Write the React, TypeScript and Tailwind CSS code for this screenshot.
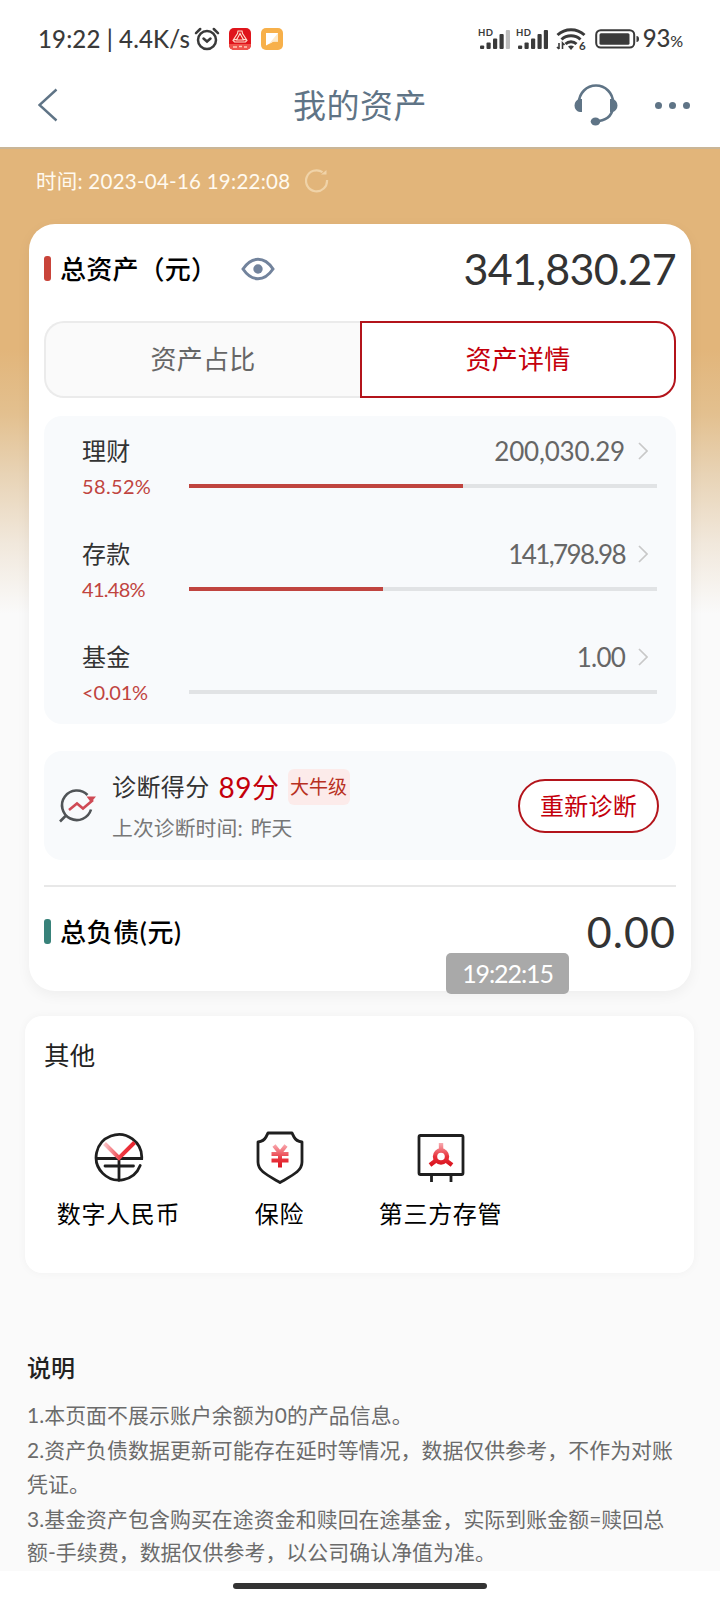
import type { ReactNode } from "react";

interface Asset {
  name: string;
  percent: string;
  ratio: number;
  amount: string;
  percentSpacing: string;
  amountSpacing: string;
}

const ASSETS: Asset[] = [
  { name: "理财", percent: "58.52%", ratio: 58.52, amount: "200,030.29", percentSpacing: "tracking-[0.35px]", amountSpacing: "tracking-[-0.2px]" },
  { name: "存款", percent: "41.48%", ratio: 41.48, amount: "141,798.98", percentSpacing: "tracking-[-0.7px]", amountSpacing: "tracking-[-1.6px]" },
  { name: "基金", percent: "<0.01%", ratio: 0, amount: "1.00", percentSpacing: "tracking-[-0.2px]", amountSpacing: "tracking-[-0.8px]" },
];

const NOTES = [
  ["1.本页面不展示账户余额为0的产品信息。"],
  ["2.资产负债数据更新可能存在延时等情况，数据仅供参考，不作为对账", "凭证。"],
  ["3.基金资产包含购买在途资金和赎回在途基金，实际到账金额=赎回总", "额-手续费，数据仅供参考，以公司确认净值为准。"],
];

function Signal({ weak }: { weak?: boolean }) {
  return (
    <svg width="32" height="22" viewBox="0 0 32 22" fill="#3a3a3a">
      <text x="0" y="8" fontSize="9.5" fontWeight="700" textLength="15" fontFamily="Lato, sans-serif">HD</text>
      <rect x="2" y="17.500" width="4.200" height="3.500" rx="1" />
      <rect x="8.500" y="14.500" width="4.200" height="6.500" rx="1" />
      <rect x="15" y="10.500" width="4.200" height="10.500" rx="1" />
      <rect x="21.500" y="6" width="4.200" height="15" rx="1" />
      <rect x="27.800" y="2" width="4.200" height="19" rx="1" fill={weak ? "#bdbdbd" : "#3a3a3a"} />
    </svg>
  );
}

function StatusBar() {
  return (
    <div className="flex h-[76px] items-center pl-[38px] pr-[37px] pt-[2px] text-[#3a3a3a]">
      <span className="whitespace-pre text-[24px] leading-[30px] tracking-[0.15px] font-medium">19:22 | 4.4K/s</span>
      <svg className="ml-[4px]" width="26" height="26" viewBox="0 0 26 26" fill="none" stroke="#3a3a3a" strokeWidth="2.5" strokeLinecap="round">
        <circle cx="13" cy="14" r="9" />
        <path d="M9.500 12.500 13 15.500l3.500-3M2 7.200 6.200 3M24 7.200 19.800 3" />
      </svg>
      <svg className="ml-[9px]" width="22" height="22" viewBox="0 0 22 22" fill="none">
        <rect width="22" height="22" rx="5" fill="#df141b" />
        <path d="M0 16h22v1a5 5 0 0 1-5 5H5a5 5 0 0 1-5-5z" fill="#f0524a" />
        <path d="M9 3h4l.5 2.500 4.500 7-1.500 1.500h-11L4 12.500l4.500-7zM11 5.500l-3.500 6.500h7zM5 12l3-1M17 12l-3-1" stroke="#ffe3d0" strokeWidth="1.100" />
        <path d="M4 19h4M10 18.500h3M15 19h3" stroke="#ffc9b8" strokeWidth="1.500" />
      </svg>
      <svg className="ml-[10px]" width="22" height="22" viewBox="0 0 22 22">
        <rect width="22" height="22" rx="5" fill="#f7b04a" />
        <path d="M5 5h12v8.500h-4.500L5 17.500z" fill="#fff" />
        <path d="M17 5v8.500h-4.500L8 16z" fill="#fdeacb" />
      </svg>
      <div className="ml-auto flex items-center">
        <Signal weak />
        <div className="w-[6px]" />
        <Signal />
        <svg className="ml-[8px]" width="30" height="24" viewBox="0 0 30 24" fill="none" stroke="#3a3a3a">
          <path d="M1.500 8a20 20 0 0 1 27 0" strokeWidth="3" />
          <path d="M5.500 12.500a14 14 0 0 1 19 0" strokeWidth="3" />
          <path d="M9.500 17a8 8 0 0 1 11 0" strokeWidth="3" />
          <path d="M12 19.500q3-2 6 0l-3 3.500z" fill="#3a3a3a" stroke="none" />
          <path d="M3 16v6M3 22l-2-2M6.500 22v-6l2 2" strokeWidth="1.600" />
          <text x="23" y="23" fontSize="11.500" fontWeight="700" fill="#3a3a3a" stroke="none" fontFamily="Lato, sans-serif">6</text>
        </svg>
        <svg className="ml-[9px]" width="44" height="20" viewBox="0 0 44 20">
          <rect x="1.200" y="1.200" width="38" height="17.400" rx="4.500" fill="none" stroke="#3a3a3a" strokeWidth="2" />
          <rect x="4.500" y="4.200" width="30" height="11.500" rx="1.500" fill="#3a3a3a" />
          <path d="M41.500 7q2.500 0 2.500 3t-2.500 3z" fill="#3a3a3a" />
        </svg>
        <span className="ml-[4px] text-[24px] leading-[30px] tracking-[-0.2px] font-medium">93<span className="text-[16px]">%</span></span>
      </div>
    </div>
  );
}

function Header() {
  return (
    <div className="flex h-[71px] items-center pb-[13px] pl-[38px] pr-[29px] text-[#5f7486]">
      <svg width="20" height="34" viewBox="0 0 20 34" fill="none" stroke="#5f7486" strokeWidth="2.400">
        <path d="M18.500 1.500 1.500 17l17 15.500" />
      </svg>
      <h1 className="ml-[235px] text-[33px] leading-[40px] tracking-[0.5px] font-normal">我的资产</h1>
      <svg className="ml-auto" width="44" height="44" viewBox="0 0 44 44" fill="none" stroke="#5f7486" strokeWidth="2.600">
        <path d="M5 22v-2.500a17 17 0 0 1 34 0V22c0 8-4 14.500-14 16" />
        <path d="M8 16v13H6a5.500 6.500 0 0 1 0-13zM36 16v13h2a5.500 6.500 0 0 0 0-13z" fill="#5f7486" stroke="none" />
        <ellipse cx="21.500" cy="38.500" rx="4.800" ry="4" fill="#5f7486" stroke="none" />
      </svg>
      <div className="ml-[37px] mr-px flex gap-[7px]">
        <i className="size-[7px] rounded-full bg-[#5f7486]" />
        <i className="size-[7px] rounded-full bg-[#5f7486]" />
        <i className="size-[7px] rounded-full bg-[#5f7486]" />
      </div>
    </div>
  );
}

function SectionTitle({ bar, spacing, children }: { bar: string; spacing: string; children: ReactNode }) {
  return (
    <div className="flex items-center">
      <i className={`h-[25px] w-[7px] rounded-[3px] ${bar}`} />
      <h2 className={`ml-[9px] text-[26px] leading-[36px] font-medium text-black ${spacing}`}>{children}</h2>
    </div>
  );
}

function AssetRow({ asset }: { asset: Asset }) {
  return (
    <div className="h-[103px] pl-[38px] pr-[19px] pt-[17px]">
      <div className="flex h-[36px] items-center justify-between">
        <span className="text-[24px] tracking-[0.3px] text-[#333]">{asset.name}</span>
        <span className="flex items-center text-[#666]">
          <span className={`text-[26px] ${asset.amountSpacing}`}>{asset.amount}</span>
          <svg className="ml-[13px] mr-[9px]" width="10" height="18" viewBox="0 0 10 18" fill="none" stroke="#c8c8c8" strokeWidth="1.700">
            <path d="m1 1 8 8-8 8" />
          </svg>
        </span>
      </div>
      <div className="flex h-[34px] items-center">
        <span className={`w-[107px] text-[20px] text-[#c0443f] ${asset.percentSpacing}`}>{asset.percent}</span>
        <div className="h-[4px] flex-1 bg-[#e1e3e5]">
          <div className="h-full bg-[#c0443f]" style={{ width: `${asset.ratio}%` }} />
        </div>
      </div>
    </div>
  );
}

function Service({ label, children }: { label: string; children: ReactNode }) {
  return (
    <div className="flex w-[161px] flex-col items-center">
      {children}
      <span className="mt-[12px] text-[24px] leading-[34px] tracking-[0.7px] text-black">{label}</span>
    </div>
  );
}

export default function App() {
  return (
    <div className="relative flex h-[1600px] w-[720px] flex-col overflow-hidden bg-white font-[Lato,'Noto_Sans_CJK_SC',sans-serif]">
      <StatusBar />
      <Header />

      <main className="h-[1424px] shrink-0 border-t-2 border-[#c9b698] bg-[#fafafa] bg-[linear-gradient(180deg,#e2b57a_0px,#e2b57a_200px,#e3c08f_265px,#e8d3b5_325px,#f1e8dc_395px,#fafafa_465px)]">
        <div className="flex h-[75px] items-center pb-[11px] pl-[36px] text-[#fffaf0]">
          <span className="text-[20.5px] tracking-[0.25px]">时间: 2023-04-16 19:22:08</span>
          <svg className="ml-[15px]" width="24" height="24" viewBox="0 0 24 24" fill="none" stroke="#f0d3a8" strokeWidth="2.200">
            <path d="M22 11A10.500 10.500 0 1 1 17.500 3.200" />
            <path d="M16 5.500h5.500V1z" fill="#f0d3a8" stroke="none" />
          </svg>
        </div>

        <section className="relative ml-[29px] h-[767px] w-[662px] rounded-[26px] bg-white px-[15px] shadow-[0_4px_14px_rgba(0,0,0,0.05)]">
          <div className="flex h-[97px] items-center pb-[8px]">
            <SectionTitle bar="bg-[#c9443a]" spacing="tracking-[0.2px]">总资产（元）</SectionTitle>
            <svg className="ml-[24px]" width="34" height="24" viewBox="0 0 34 24" fill="none" stroke="#72839c" strokeWidth="3">
              <path d="M2 12Q8.500 2.300 17 2.300T32 12Q25.500 21.700 17 21.700T2 12z" />
              <circle cx="17" cy="12" r="4.700" fill="#72839c" stroke="none" />
            </svg>
            <span className="ml-auto text-[43px] leading-[50px] tracking-[-0.7px] text-[#333]">341,830.27</span>
          </div>

          <div className="flex h-[77px] text-[26px] tracking-[0.2px]">
            <button className="w-[316px] rounded-l-[20px] border-2 border-r-0 border-[#ebebeb] bg-[#fafafa] text-[#666]">资产占比</button>
            <button className="w-[316px] rounded-r-[20px] border-2 border-[#b3141b] bg-white text-[#c4000b]">资产详情</button>
          </div>

          <div className="mt-[18px] h-[308px] rounded-[18px] bg-[#f8fafc]">
            {ASSETS.map((a) => (
              <AssetRow key={a.name} asset={a} />
            ))}
          </div>

          <div className="mt-[27px] flex h-[109px] items-center rounded-[18px] bg-[#f8fafc] pl-[15px] pr-[17px]">
            <svg width="38" height="36" viewBox="0 0 38 36" fill="none" strokeWidth="2.600">
              <path d="M28.500 7A14.800 14.800 0 1 0 32 21.500M7 27.500 1 33.500" stroke="#505457" />
              <path d="m10 22 8-6.500 6 5 10-8.500" stroke="#cf4a55" />
              <path d="M27.500 8.500h9.500l-5 6z" fill="#cf4a55" />
            </svg>
            <div className="ml-[15px] pt-[2px]">
              <div className="flex h-[40px] items-center">
                <span className="text-[24px] tracking-[0.4px] text-[#333]">诊断得分</span>
                <span className="ml-[9px] text-[27px] tracking-[0.5px] text-[#c4000b]"><span className="text-[28px]">89</span>分</span>
                <span className="ml-[8px] h-[36px] w-[62px] rounded-[6px] bg-[#fcebea] text-center text-[19px] leading-[36px] text-[#b8301f]">大牛级</span>
              </div>
              <p className="mt-[3px] h-[36px] text-[20.8px] leading-[36px] tracking-[0.1px] text-[#777]">上次诊断时间:<span className="ml-[8px]">昨天</span></p>
            </div>
            <button className="ml-auto h-[54px] w-[141px] rounded-full border-2 border-[#b3141b] bg-white text-[24px] tracking-[0.3px] text-[#c4000b]">重新诊断</button>
          </div>

          <div className="mt-[25px] h-[2px] bg-[#e8e8e8]" />
          <div className="flex h-[90px] items-center justify-between pb-px">
            <SectionTitle bar="bg-[#38827a]" spacing="tracking-[0.6px]">总负债(元)</SectionTitle>
            <span className="text-[43px] leading-[50px] tracking-[1.100px] text-[#333]">0.00</span>
          </div>

          {/* floating clock drawn over the card's bottom edge */}
          <div className="absolute left-[417px] top-[729px] h-[41px] w-[123px] rounded-[5px] bg-[#a9a9a9] text-center text-[25px] leading-[41px] tracking-[-1.100px] text-white">19:22:15</div>
        </section>

        <section className="ml-[25px] mt-[25px] h-[257px] w-[669px] rounded-[17px] bg-white shadow-[0_0_10px_rgba(0,0,0,0.04)]">
          <h3 className="pl-[19px] pt-[21px] text-[25.5px] leading-[36px] tracking-[0.3px] text-[#222]">其他</h3>
          <div className="mt-[58px] flex pl-[13px]">
            <Service label="数字人民币">
              <svg width="54" height="54" viewBox="0 0 54 54" fill="none" stroke="#1f1f1f" strokeWidth="2.800" strokeLinecap="round">
                <defs>
                  <linearGradient id="rmb" x1="0" y1="0" x2="1" y2="0">
                    <stop offset="0" stopColor="#fbc4c8" />
                    <stop offset="0.550" stopColor="#ee3a42" />
                    <stop offset="1" stopColor="#e8252f" />
                  </linearGradient>
                </defs>
                <path d="M48.200 34.500A22.800 22.800 0 1 1 49.700 27.500H5M13 35h28.500M27 27.500v22" />
                <path d="M12.500 12.500 27 27l15.500-15.500" stroke="url(#rmb)" strokeWidth="4" strokeLinecap="butt" />
              </svg>
            </Service>
            <Service label="保险">
              <svg width="54" height="54" viewBox="0 0 54 54" fill="none" stroke="#1f1f1f" strokeWidth="2.800" strokeLinejoin="round">
                <defs>
                  <linearGradient id="yuan" gradientUnits="userSpaceOnUse" x1="0" y1="14" x2="0" y2="38">
                    <stop offset="0" stopColor="#f8a5ab" />
                    <stop offset="0.600" stopColor="#e8323c" />
                    <stop offset="1" stopColor="#d8111c" />
                  </linearGradient>
                </defs>
                <path d="M15 2h24l2 4c1.500 3 4 4.500 8 5v20c0 9-9 13-22 20.500C14 44 5 40 5 31V11c4-.5 6.500-2 8-5z" />
                <path d="m21 14.500 6 7.500 6-7.500M18.500 23h17M18.500 29.500h17M27 22v14.500" stroke="url(#yuan)" strokeWidth="4" />
              </svg>
            </Service>
            <Service label="第三方存管">
              <svg width="54" height="54" viewBox="0 0 54 54" fill="none" stroke="#1f1f1f" strokeWidth="2.800" strokeLinejoin="round">
                <defs>
                  <linearGradient id="depot" gradientUnits="userSpaceOnUse" x1="0" y1="11" x2="0" y2="35">
                    <stop offset="0" stopColor="#f9b5ba" />
                    <stop offset="0.600" stopColor="#e8323c" />
                    <stop offset="1" stopColor="#d8111c" />
                  </linearGradient>
                </defs>
                <rect x="5" y="4.500" width="44" height="39" rx="1.500" />
                <path d="M17.500 44v7M37 44v7" />
                <g stroke="url(#depot)" strokeWidth="4.400">
                  <circle cx="27" cy="25.500" r="6" />
                  <path d="M27.100 20 27 12M22 29.500l-6 4.500M32 29.500l6 4.500" />
                </g>
              </svg>
            </Service>
          </div>
        </section>

        <section className="px-[27px] pt-[78px]">
          <h3 className="text-[24px] leading-[34px] font-medium text-[#222]">说明</h3>
          <div className="mt-[13px] whitespace-nowrap text-[20.9px] leading-[33.600px] tracking-[0.070px] text-[#6b6b6b]">
            {NOTES.map((lines) => (
              <p key={lines[0]} className="mb-[1.500px]">
                {lines.map((l) => (
                  <span key={l} className="block">{l}</span>
                ))}
              </p>
            ))}
          </div>
        </section>
      </main>

      <div className="flex flex-1 justify-center pt-[12px]">
        <div className="h-[6px] w-[254px] rounded-full bg-[#333]" />
      </div>
    </div>
  );
}
